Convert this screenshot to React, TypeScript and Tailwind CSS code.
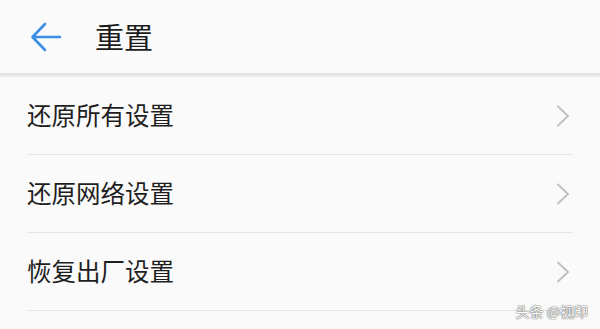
import React from 'react';

const items = ['还原所有设置', '还原网络设置', '恢复出厂设置'];

const font = { fontFamily: '"Noto Sans CJK SC", "Noto Sans", sans-serif' };

const BackArrow = () => (
  <svg width="32" height="32" viewBox="0 0 32 32" fill="none" className="block">
    <path d="M30 16H3M15 3L2.5 16L15 29" stroke="#3a8ee6" strokeWidth="2.6" strokeLinecap="round" strokeLinejoin="round" />
  </svg>
);

const Chevron = () => (
  <svg width="14" height="22" viewBox="0 0 14 22" fill="none" className="block">
    <path d="M2 1.5L12 11L2 20.5" stroke="#c2c2c2" strokeWidth="2" strokeLinecap="round" strokeLinejoin="round" />
  </svg>
);

const App: React.FC = () => {
  return (
    <div className="relative w-[600px] h-[329px] overflow-hidden bg-[#fafafa]" style={font}>
      {/* header */}
      <div className="h-[73px] flex items-center">
        <div className="ml-[30px]">
          <BackArrow />
        </div>
        <div className="ml-[33px] text-[29px] leading-none text-[#1c1c1c]">重置</div>
      </div>
      <div className="h-[4px] bg-gradient-to-b from-[#e2e2e2] to-[#ececec]" />

      {/* list */}
      <div className="pl-[27px] pr-[27px]">
        {items.map((label) => (
          <div key={label} className="h-[78px] flex items-center justify-between border-b-[1.5px] border-[#e4e4e4]">
            <span className="text-[24.5px] leading-none text-[#1e1e1e]">{label}</span>
            <div className="mr-[3px]">
              <Chevron />
            </div>
          </div>
        ))}
      </div>

      {/* watermark */}
      <div
        className="absolute right-[10px] bottom-[11px] text-[14px] leading-none text-[#fdfdfd] px-[2px]"
        style={{ textShadow: '0 0 1.5px #444, 0 0 1px #666' }}
      >
        头条 @视印
      </div>
    </div>
  );
};

export default App;
